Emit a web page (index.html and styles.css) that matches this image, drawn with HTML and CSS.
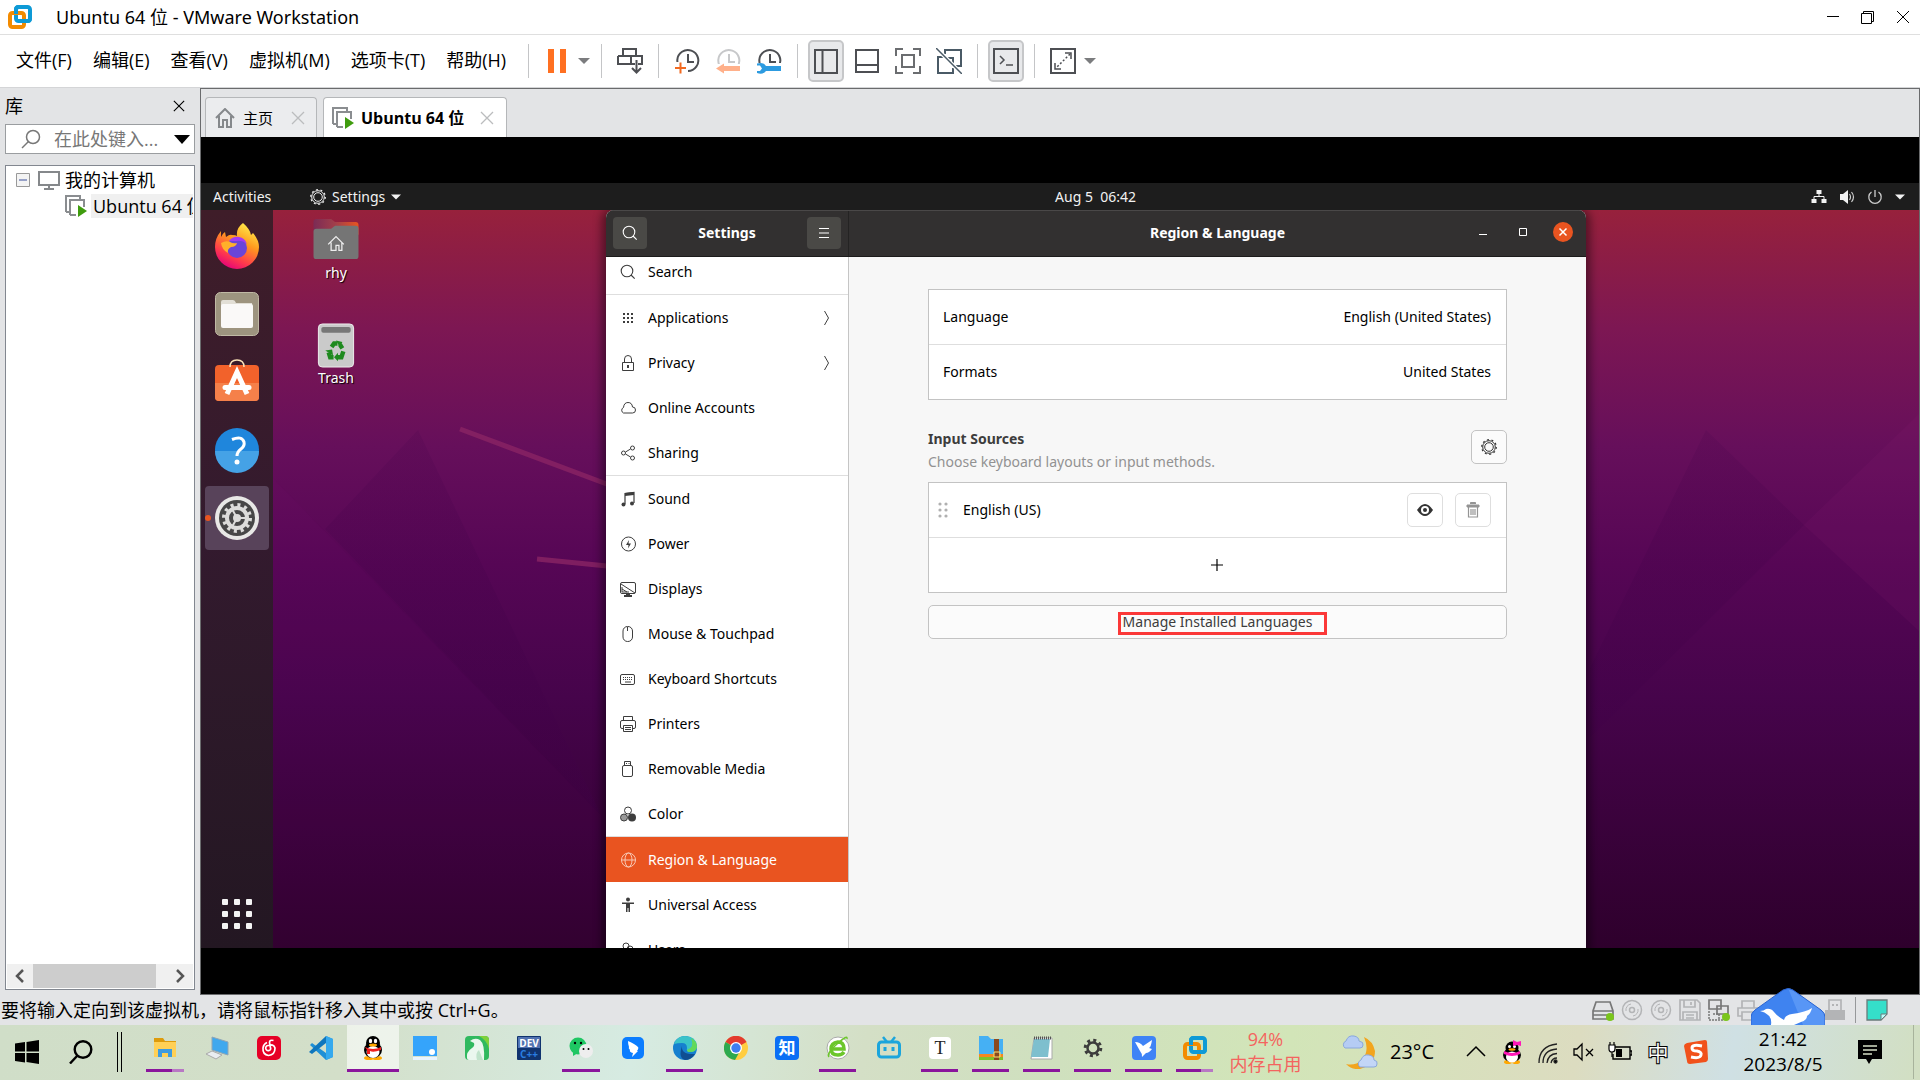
FILE: index.html
```html
<!DOCTYPE html>
<html lang="zh-CN">
<head>
<meta charset="utf-8">
<meta name="viewport" content="width=device-width, initial-scale=1">
<title>Ubuntu 64 位 - VMware Workstation</title>
<link rel="stylesheet" href="styles.css">
</head>
<body>
<svg class="defs" aria-hidden="true">
  <defs>
    <symbol id="vmware" viewBox="0 0 24 24">
      <rect x="8" y="2" width="14" height="14" rx="2.500" fill="none" stroke="#0e9ad6" stroke-width="4"/>
      <rect x="2" y="8" width="14" height="14" rx="2.500" fill="none" stroke="#f38b00" stroke-width="4"/>
      <path d="M8 9V4.500Q8 2 10.500 2H13" fill="none" stroke="#0e9ad6" stroke-width="4"/>
      <path d="M10 16h9.500Q22 16 22 13.500V10" fill="none" stroke="#0e9ad6" stroke-width="4"/>
    </symbol>
    <symbol id="vm" viewBox="0 0 22 22">
      <path d="M1 17V1h14v3M1 17h3" fill="none" stroke="#8a8d90" stroke-width="2"/>
      <path d="M5 20V5h14v7M5 20h6" fill="none" stroke="#8a8d90" stroke-width="2"/>
      <path d="M13 10l9 6-9 6z" fill="#3f9c0e"/>
    </symbol>
    <symbol id="close" viewBox="0 0 14 14"><path d="M1 1l12 12M13 1L1 13" fill="none" stroke="currentColor" stroke-width="1.300"/></symbol>
    <symbol id="down" viewBox="0 0 12 12"><path d="M0 3h12L6 9z" fill="currentColor"/></symbol>
    <symbol id="clock" viewBox="0 0 26 26"><path d="M7 20.500A10.500 10.500 0 1 1 14 23M14 6v8h6" fill="none" stroke="currentColor" stroke-width="2"/></symbol>
    <symbol id="gear" viewBox="0 0 16 16">
      <circle cx="8" cy="8" r="4.300" fill="none" stroke="currentColor"/>
      <circle cx="8" cy="8" r="6.300" fill="none" stroke="currentColor"/>
      <circle cx="8" cy="8" r="7.300" fill="none" stroke="currentColor" stroke-width="1.200" stroke-dasharray="2 2.587"/>
    </symbol>
    <symbol id="magnifier" viewBox="0 0 16 16"><circle cx="7" cy="7" r="5.800" fill="none" stroke="currentColor" stroke-width="1.100"/><path d="M11 11l3.700 3.700" stroke="currentColor" stroke-width="1.100"/></symbol>
    <symbol id="disc" viewBox="0 0 22 22"><circle cx="11" cy="11" r="9.500" fill="none" stroke="currentColor" stroke-width="1.500"/><circle cx="11" cy="11" r="2.500" fill="none" stroke="currentColor" stroke-width="1.500"/><path d="M5 12a6 6 0 0 1 5-7M17 10a6 6 0 0 1-5 7" fill="none" stroke="currentColor"/></symbol>
  </defs>
</svg>

<header class="titlebar">
  <svg class="i24"><use href="#vmware"/></svg>
  <h1 class="title">Ubuntu 64 位 - VMware Workstation</h1>
  <button class="win-btn" aria-label="最小化"><svg viewBox="0 0 14 14"><path d="M1 6.500h12" stroke="#000"/></svg></button>
  <button class="win-btn" aria-label="还原"><svg viewBox="0 0 14 14"><path d="M.5 3.500h10v10H.5zM2.500 3V1.500h10v10H11" fill="none" stroke="#000"/></svg></button>
  <button class="win-btn" aria-label="关闭"><svg viewBox="0 0 14 14"><path d="M1 1l12 12M13 1L1 13" stroke="#000"/></svg></button>
</header>

<div class="menubar">
  <nav class="menus">
    <button>文件(F)</button><button>编辑(E)</button><button>查看(V)</button><button>虚拟机(M)</button><button>选项卡(T)</button><button>帮助(H)</button>
  </nav>
  <div class="tools">
    <span class="sep"></span>
    <button class="tool" aria-label="挂起"><svg viewBox="0 0 26 26"><path d="M4 1h6v24H4zM16 1h6v24h-6z" fill="#ff7021"/></svg></button>
    <button class="drop" aria-label="电源选项"><svg><use href="#down"/></svg></button>
    <span class="sep"></span>
    <button class="tool" aria-label="发送"><svg viewBox="0 0 26 26"><path d="M6 8V1h13v7M1 8h24v8h-4M14 8v8H1V8M14 16h4M19.500 12v12M15 20l4.500 4.500L24 20" fill="none" stroke="#4d4f53" stroke-width="2"/></svg></button>
    <span class="sep"></span>
    <button class="tool" aria-label="拍摄快照"><svg viewBox="0 0 26 26"><use href="#clock"/><path d="M0 14h12v11H0z" fill="#fff"/><path d="M1 20h11M6.500 14.500v11" stroke="#f26a21" stroke-width="2"/></svg></button>
    <button class="tool" aria-label="恢复快照"><svg viewBox="0 0 26 26" color="#c7c8ca"><use href="#clock"/><path d="M0 16h26v9H0z" fill="#fff"/><path d="M1 20.500l8-5v2.500h16v5H9v2.500z" fill="#ffb08a"/></svg></button>
    <button class="tool" aria-label="管理快照"><svg viewBox="0 0 26 26"><use href="#clock"/><path d="M0 15h26v10H0z" fill="#fff"/><path d="M1 15.500q6-2 9 2.500h15v5H10q-3 4-9 2v-2h3l2-2.500-2-3H1z" fill="#2d9be0"/></svg></button>
    <span class="sep"></span>
    <button class="tool on" aria-label="显示库"><svg viewBox="0 0 26 26"><path d="M2 2h22v23H2zM9.500 2v23" fill="none" stroke="#4d4f53" stroke-width="2"/></svg></button>
    <button class="tool" aria-label="缩略图栏"><svg viewBox="0 0 26 26"><path d="M2 2h22v22H2zM2 17h22" fill="none" stroke="#4d4f53" stroke-width="2"/></svg></button>
    <button class="tool" aria-label="全屏"><svg viewBox="0 0 26 26"><path d="M1 8V1h7M18 1h7v7M25 18v7h-7M8 25H1v-7M7 7h12v12H7z" fill="none" stroke="#6b6d70" stroke-width="2"/></svg></button>
    <button class="tool" aria-label="Unity"><svg viewBox="0 0 26 26"><path d="M9 6V2h16v16h-5M8 9H2v16h15v-5M11 10h6v6" fill="none" stroke="#4a5a66" stroke-width="2"/><path d="M0 0l26 26" stroke="#fff" stroke-width="4"/><path d="M0 0l26 26" stroke="#4a5a66" stroke-width="1.500"/></svg></button>
    <span class="sep"></span>
    <button class="tool on" aria-label="控制台"><svg viewBox="0 0 26 26"><path d="M1 1h24v24H1z" fill="none" stroke="#4d4f53" stroke-width="2"/><path d="M7 8l4 4-4 4M13 17h7" fill="none" stroke="#4d4f53" stroke-width="1.500"/></svg></button>
    <span class="sep"></span>
    <button class="tool" aria-label="拉伸"><svg viewBox="0 0 26 26"><path d="M1 1h24v24H1z" fill="none" stroke="#4d4f53" stroke-width="2"/><path d="M15 5h6v6M5 15v6h6" fill="none" stroke="#4d4f53" stroke-width="1.500"/><path d="M20 6L6 20" stroke="#4d4f53" stroke-width="1.500" stroke-dasharray="2 2"/></svg></button>
    <button class="drop" aria-label="拉伸选项"><svg><use href="#down"/></svg></button>
  </div>
</div>

<div class="main">
  <aside class="library">
    <div class="lib-head"><h2>库</h2><button aria-label="关闭库"><svg><use href="#close"/></svg></button></div>
    <div class="lib-search">
      <svg viewBox="0 0 20 20"><circle cx="12" cy="8" r="6.500" fill="none" stroke="#777" stroke-width="1.500"/><path d="M7.500 12.500L1 19" stroke="#777" stroke-width="1.500"/></svg>
      <input type="text" placeholder="在此处键入..." aria-label="搜索库">
      <button aria-label="搜索选项"><svg viewBox="0 0 16 10"><path d="M0 1h16L8 10z"/></svg></button>
    </div>
    <div class="tree">
      <div class="tree-row">
        <svg class="minus" viewBox="0 0 14 14"><path d="M.5.500h13v13H.5z" fill="#f4f4f4" stroke="#999"/><path d="M3 7h8" stroke="#3a4f9a"/></svg>
        <svg class="i22" viewBox="0 0 22 22"><path d="M1 3h20v13H1zM11 16v4M6 20h10" fill="none" stroke="#85888b" stroke-width="2"/></svg>
        <span>我的计算机</span>
      </div>
      <div class="tree-row child">
        <svg class="i22"><use href="#vm"/></svg>
        <span class="picked">Ubuntu 64 位</span>
      </div>
      <div class="hscroll">
        <svg viewBox="0 0 10 14"><path d="M8 1L2 7l6 6" fill="none" stroke="#555" stroke-width="2.500"/></svg>
        <span class="thumb"></span>
        <svg viewBox="0 0 10 14"><path d="M2 1l6 6-6 6" fill="none" stroke="#555" stroke-width="2.500"/></svg>
      </div>
    </div>
  </aside>

  <section class="view">
    <div class="tabs">
      <div class="tab home">
        <svg class="i20" viewBox="0 0 20 20"><path d="M1 10l9-9 9 9M4 8v11h4v-7h4v7h4V8" fill="none" stroke="#85888b" stroke-width="2"/></svg>
        <span>主页</span>
        <button aria-label="关闭主页"><svg><use href="#close"/></svg></button>
      </div>
      <div class="tab active">
        <svg class="i22"><use href="#vm"/></svg>
        <span>Ubuntu 64 位</span>
        <button aria-label="关闭 Ubuntu"><svg><use href="#close"/></svg></button>
      </div>
    </div>

    <div class="guest">
      <div class="topbar">
        <span class="activities">Activities</span>
        <span class="appmenu"><svg class="i16"><use href="#gear"/></svg>Settings<svg class="caret"><use href="#down"/></svg></span>
        <time class="clock">Aug 5&nbsp; 06:42</time>
        <span class="indicators">
          <svg class="i16" viewBox="0 0 16 16"><path d="M5.500 1h5v4h-5zM.5 10h5v4h-5zM10.500 10h5v4h-5z" fill="#f2f2f2"/><path d="M8 4v4M3 11V7.500h10V11" fill="none" stroke="#f2f2f2"/></svg>
          <svg class="i16" viewBox="0 0 16 16"><path d="M1 5h3l5-4v14l-5-4H1z" fill="#f2f2f2"/><path d="M10.500 5q2 3 0 6M12.500 3q4 5 0 10" fill="none" stroke="#ccc" stroke-width="1.200"/></svg>
          <svg class="i16" viewBox="0 0 16 16"><path d="M4.500 3a6.200 6.200 0 1 0 7 0M8 1v7" fill="none" stroke="#ccc" stroke-width="1.300"/></svg>
          <svg class="caret"><use href="#down"/></svg>
        </span>
      </div>

      <div class="desktop">
        <svg class="wallpaper" viewBox="0 0 1718 738" preserveAspectRatio="none" aria-hidden="true">
          <defs>
            <linearGradient id="facet" x1="0" y1="0" x2="0" y2="1"><stop offset="0" stop-color="#400048" stop-opacity=".14"/><stop offset=".5" stop-color="#400048" stop-opacity=".22"/><stop offset="1" stop-color="#400048" stop-opacity=".28"/></linearGradient>
          </defs>
          <path d="M217 220L400 605 124 319z" fill="url(#facet)"/>
          <path d="M72 268L400 605 400 738H72z" fill="#8a1080" opacity=".05"/>
          <path d="M1505 220l98 95-214 213v-70z" fill="url(#facet)"/>
          <path d="M1603 315l115-111v217z" fill="#8a1d74" opacity=".12"/>
          <path d="M259 219l160 60M336 349l80 8" stroke="#8a2464" stroke-width="5" opacity=".8"/>
        </svg>

        <nav class="dock" aria-label="Dock">
          <button aria-label="Firefox"><svg viewBox="0 0 44 46">
            <defs><linearGradient id="ff" x1=".8" y1="0" x2=".3" y2="1"><stop offset="0" stop-color="#fff44f"/><stop offset=".4" stop-color="#ff9a1e"/><stop offset=".75" stop-color="#ff3a4c"/><stop offset="1" stop-color="#e4007c"/></linearGradient></defs>
            <path d="M28 0q7 6 8 12l2-2q6 7 6 14a22 22 0 0 1-44 0Q0 15 6 8v6q2-4 4-5l1 5q4-3 6-2 4 0 5 1Q21 5 28 0z" fill="url(#ff)"/>
            <circle cx="22" cy="25" r="10" fill="#6a45d8"/><path d="M14 18q4-5 10-4 6 1 8 7-5-4-10-3z" fill="#a43bf0"/>
            <path d="M6 20q5-3 9-1 3 2 7 1-1 4-6 4-4 2-3 6-6-3-7-10z" fill="#ffb02a"/>
          </svg></button>
          <button aria-label="Files"><svg viewBox="0 0 44 46"><rect x=".5" y="1.500" width="43" height="43" rx="5" fill="#9d947f" stroke="#c0b9a5"/><path d="M6 16V11q0-2 2-2h10q2 0 3 3h16v6z" fill="#e2dfd6"/><rect x="6" y="13" width="32" height="24" rx="2" fill="#faf9f8"/></svg></button>
          <button aria-label="Software"><svg viewBox="0 0 44 46"><rect y="6" width="44" height="36" rx="4" fill="#f2622b"/><path d="M0 24h44v14q0 4-4 4H4q-4 0-4-4z" fill="#f5804a"/><path d="M15 8q0-7 7-7t7 7" fill="none" stroke="#fbe3b8" stroke-width="1.500"/><path d="M12 35l10-22 10 22" fill="none" stroke="#fff" stroke-width="5"/><path d="M10 28.500h24" stroke="#fff" stroke-width="5" stroke-linecap="round"/></svg></button>
          <button aria-label="Help"><svg viewBox="0 0 44 46"><circle cx="22" cy="23" r="22" fill="#1f86dc"/><path d="M0 24a22 22 0 0 0 44 0z" fill="#45a2e6"/><path d="M17 12.500q10-4 12 2.500 1 4-3 7t-4 7" fill="none" stroke="#fff" stroke-width="3"/><circle cx="22" cy="35" r="2.500" fill="#fff"/></svg></button>
          <button class="running" aria-label="Settings"><svg viewBox="0 0 44 46"><circle cx="22" cy="23" r="22" fill="#e8e8e6"/><circle cx="22" cy="23" r="18" fill="#474747"/><circle cx="22" cy="23" r="13" fill="none" stroke="#dcdcda" stroke-width="4" stroke-dasharray="3 3.807"/><circle cx="22" cy="23" r="10" fill="none" stroke="#dcdcda" stroke-width="4"/><circle cx="22" cy="23" r="4" fill="#dcdcda"/><path d="M22 23h10M22 23l-5-9M22 23l-5 9" stroke="#dcdcda" stroke-width="2"/></svg></button>
          <button class="apps" aria-label="Show Applications"><svg viewBox="0 0 44 46"><g fill="#f4f4f4"><rect x="7" y="8" width="6" height="6" rx="1"/><rect x="19" y="8" width="6" height="6" rx="1"/><rect x="31" y="8" width="6" height="6" rx="1"/><rect x="7" y="20" width="6" height="6" rx="1"/><rect x="19" y="20" width="6" height="6" rx="1"/><rect x="31" y="20" width="6" height="6" rx="1"/><rect x="7" y="32" width="6" height="6" rx="1"/><rect x="19" y="32" width="6" height="6" rx="1"/><rect x="31" y="32" width="6" height="6" rx="1"/></g></svg></button>
        </nav>

        <div class="shortcuts">
          <figure><svg viewBox="0 0 46 46"><defs><linearGradient id="fd"><stop offset="0" stop-color="#7b2b55"/><stop offset=".5" stop-color="#a33f4a"/><stop offset="1" stop-color="#e95420"/></linearGradient></defs><path d="M0 14V4q0-3 3-3h15l4 3h21q3 0 3 3v10z" fill="url(#fd)"/><path d="M0 14q0-3 3-3h15l4-3h21q3 0 3 3v28q0 3-3 3H3q-3 0-3-3z" fill="#757575"/><path d="M15 27l8-8 8 8M18 25v8h5v-5h3v5h3v-8" fill="none" stroke="#eee" stroke-width="1.300"/></svg><figcaption>rhy</figcaption></figure>
          <figure><svg viewBox="0 0 46 46"><rect x="5" y="1" width="36" height="44" rx="4" fill="#cacaca" stroke="#eee"/><rect x="8" y="4" width="30" height="6" rx="2" fill="#777"/><g fill="none" stroke="#1f8a1f" stroke-width="4.500"><path d="M18.500 24.500l2.500-3.500h3.500M27 22l2.500 4M30.500 29l-2 6H24M20.500 35H17l-1.500-5"/></g><path d="M23 18l6.500 1.500L27 25zM25 30.500V39l-4-4zM12 28l7-1 1 6z" fill="#1f8a1f"/></svg><figcaption>Trash</figcaption></figure>
        </div>

        <section class="window">
          <header class="wbar">
            <div class="wbar-left">
              <button class="hbtn" aria-label="Search"><svg class="i16"><use href="#magnifier"/></svg></button>
              <h2>Settings</h2>
              <button class="hbtn" aria-label="Menu"><svg class="i16" viewBox="0 0 16 16"><path d="M3 3.500h10M3 8h10M3 12.500h10" stroke="#fff" stroke-width="1.200"/></svg></button>
            </div>
            <div class="wbar-right">
              <h2>Region &amp; Language</h2>
              <div class="wctl">
                <button aria-label="Minimize"><svg viewBox="0 0 20 20"><path d="M6 12.500h8" stroke="#fff"/></svg></button>
                <button aria-label="Maximize"><svg viewBox="0 0 20 20"><path d="M6.500 6.500h7v7h-7z" fill="none" stroke="#fff"/></svg></button>
                <button class="wclose" aria-label="Close"><svg viewBox="0 0 20 20"><path d="M6.500 6.500l7 7M13.500 6.500l-7 7" stroke="#fff" stroke-width="1.500"/></svg></button>
              </div>
            </div>
          </header>
          <div class="wbody">
            <nav class="cats">
              <a href="#" class="end"><svg><use href="#magnifier"/></svg>Search</a>
              <a href="#"><svg viewBox="0 0 16 16"><path d="M3 4h10M3 8h10M3 12h10" stroke="currentColor" stroke-width="2" stroke-dasharray="2 2"/></svg>Applications<svg class="chev" viewBox="0 0 8 16"><path d="M1.500 1l4 7-4 7" fill="none" stroke="currentColor"/></svg></a>
              <a href="#"><svg viewBox="0 0 16 16"><path d="M2.500 7.500h11v8h-11zM4.500 7V4a3.500 3.500 0 0 1 7 0v3" fill="none" stroke="currentColor"/><path d="M7 10h2v3H7z" fill="currentColor"/></svg>Privacy<svg class="chev" viewBox="0 0 8 16"><path d="M1.500 1l4 7-4 7" fill="none" stroke="currentColor"/></svg></a>
              <a href="#"><svg viewBox="0 0 16 16"><path d="M3.500 13a3 3 0 0 1 0-5.500Q4 2.500 8 2.500t4.500 4.500a3 3 0 0 1 0 6z" fill="none" stroke="currentColor"/></svg>Online Accounts</a>
              <a href="#" class="end"><svg viewBox="0 0 16 16"><g fill="none" stroke="currentColor"><circle cx="3.500" cy="8" r="2"/><circle cx="12.500" cy="3" r="2"/><circle cx="12.500" cy="13" r="2"/><path d="M5.500 7l5-3M5.500 9l5 3"/></g></svg>Sharing</a>
              <a href="#"><svg viewBox="0 0 16 16"><path d="M5 13V2.500l9-1V12" fill="none" stroke="currentColor" stroke-width="1.200"/><path d="M5 2l9-1v3l-9 1z" fill="currentColor"/><circle cx="3.500" cy="13.500" r="2" fill="currentColor"/><circle cx="12" cy="12.500" r="2" fill="currentColor"/></svg>Sound</a>
              <a href="#"><svg viewBox="0 0 16 16"><circle cx="8.500" cy="8" r="7" fill="none" stroke="currentColor"/><path d="M9 4L6 9h2.500L8 12.500l3-5H8.500z" fill="currentColor"/></svg>Power</a>
              <a href="#"><svg viewBox="0 0 16 16"><rect x=".5" y="1.500" width="15" height="11" rx="1.500" fill="none" stroke="currentColor"/><path d="M1 3l14 9" stroke="currentColor"/><path d="M2 6v5h7M2 8l5 3" fill="none" stroke="currentColor"/><path d="M6 13h4v1h2v2H4v-2h2z" fill="currentColor"/></svg>Displays</a>
              <a href="#"><svg viewBox="0 0 16 16"><rect x="3" y=".5" width="9.500" height="15" rx="4.500" fill="none" stroke="currentColor"/><path d="M7.500 1v4" stroke="currentColor"/></svg>Mouse &amp; Touchpad</a>
              <a href="#"><svg viewBox="0 0 16 16"><rect x=".5" y="3.500" width="14" height="10" rx="1.500" fill="none" stroke="currentColor"/><path d="M3 6.500h10M3 8.500h10" stroke="currentColor" stroke-dasharray="1 1"/><path d="M5 11h6" stroke="currentColor"/></svg>Keyboard Shortcuts</a>
              <a href="#"><svg viewBox="0 0 16 16"><path d="M3.500 4V.5h9V4M3 12.500H2Q.5 12.500.5 11V6q0-1.500 1.500-1.500h12q1.500 0 1.500 1.500v5q0 1.500-1.500 1.500h-1M3.500 9.500v6h9v-6zM5 11.500h6M5 13.500h6" fill="none" stroke="currentColor"/></svg>Printers</a>
              <a href="#"><svg viewBox="0 0 16 16"><path d="M4.500 4V.5h6V4M6 2.500h1M8.500 2.500h1" fill="none" stroke="currentColor"/><rect x="2.500" y="4.500" width="10" height="11" rx="1.500" fill="none" stroke="currentColor"/></svg>Removable Media</a>
              <a href="#" class="end"><svg viewBox="0 0 16 16"><circle cx="8" cy="4.500" r="3.500" fill="none" stroke="currentColor"/><circle cx="4" cy="11.500" r="3.500" fill="#999" stroke="currentColor"/><circle cx="12" cy="11.500" r="4" fill="currentColor"/></svg>Color</a>
              <a href="#" class="current" aria-current="page"><svg viewBox="0 0 16 16"><g fill="none" stroke="currentColor"><circle cx="8.500" cy="8" r="7"/><ellipse cx="8.500" cy="8" rx="3.500" ry="7"/><path d="M1.500 8h14"/></g></svg>Region &amp; Language</a>
              <a href="#"><svg viewBox="0 0 16 16"><circle cx="8" cy="2.500" r="2" fill="currentColor"/><path d="M2 5.500h12v1.500h-4V15H8.500v-4h-1v4H6V7H2z" fill="currentColor"/></svg>Universal Access</a>
              <a href="#"><svg viewBox="0 0 16 16"><g fill="none" stroke="currentColor"><circle cx="6" cy="4" r="3"/><circle cx="10" cy="7" r="3"/></g></svg>Users</a>
            </nav>
            <div class="panel">
              <div class="card">
                <div class="row"><span>Language</span><span>English (United States)</span></div>
                <div class="row"><span>Formats</span><span>United States</span></div>
              </div>
              <div class="sources-head">
                <div><h3>Input Sources</h3><p>Choose keyboard layouts or input methods.</p></div>
                <button class="sq" aria-label="Input options"><svg class="i16"><use href="#gear"/></svg></button>
              </div>
              <div class="card">
                <div class="row source">
                  <svg class="grip" viewBox="0 0 10 16"><g fill="#b0b0b0"><circle cx="2" cy="2" r="1.600"/><circle cx="8" cy="2" r="1.600"/><circle cx="2" cy="8" r="1.600"/><circle cx="8" cy="8" r="1.600"/><circle cx="2" cy="14" r="1.600"/><circle cx="8" cy="14" r="1.600"/></g></svg>
                  <span class="grow">English (US)</span>
                  <button class="sq soft" aria-label="Preview"><svg class="i16" viewBox="0 0 16 16"><path d="M0 8q4-6 8-6t8 6q-4 6-8 6T0 8z" fill="#333"/><circle cx="8" cy="8" r="4" fill="#fff"/><circle cx="8" cy="8" r="2" fill="#333"/></svg></button>
                  <button class="sq soft" aria-label="Remove"><svg class="i16" viewBox="0 0 16 16"><path d="M2 3h12v2H2zM5.500 2V.5h5V2" fill="#949494" stroke="#949494"/><path d="M3.500 5v10h9V5M6 7v6M8 7v6M10 7v6" fill="none" stroke="#949494" stroke-width="1.200"/></svg></button>
                </div>
                <button class="row add" aria-label="Add input source"><svg viewBox="0 0 12 12"><path d="M6 0v12M0 6h12" stroke="#000" stroke-width="1.200"/></svg></button>
              </div>
              <button class="manage">Manage Installed Languages<span class="mark"></span></button>
            </div>
          </div>
        </section>
      </div>
    </div>
  </section>
</div>

<footer class="status">
  <span class="hint">要将输入定向到该虚拟机，请将鼠标指针移入其中或按 Ctrl+G。</span>
  <div class="devices">
    <svg viewBox="0 0 22 22"><path d="M4 3h14l3 9v8H1v-8zM1 12h20M1 16h16" fill="none" stroke="#777" stroke-width="1.700"/><circle cx="18" cy="18" r="4" fill="#7ac51c"/></svg>
    <svg><use href="#disc"/></svg>
    <svg><use href="#disc"/></svg>
    <svg viewBox="0 0 22 22"><path d="M1 1h17l3 3v17H1zM5 1v7h11V1M4 21v-8h14v8M12 3v3M7 16h8M7 19h8" fill="none" stroke="currentColor" stroke-width="1.700"/></svg>
    <svg viewBox="0 0 22 22"><path d="M1 1h12v9H1zM9 7h11v8H9z" fill="#e3e4e6" stroke="#777" stroke-width="1.700"/><path d="M1 12v9h14M5 15h6v6" fill="none" stroke="#777" stroke-width="1.500" stroke-dasharray="2 1"/><circle cx="18" cy="18" r="4" fill="#7ac51c"/></svg>
    <svg viewBox="0 0 22 22"><path d="M5 9V2h12v7M5 17H1V9h20v8h-4M5 13h12v8H5z" fill="none" stroke="currentColor" stroke-width="1.700"/></svg>
    <span class="covered"></span>
    <svg viewBox="0 0 22 22"><path d="M5 11V1h12v10" fill="none" stroke="currentColor" stroke-width="1.700"/><path d="M1 11h20v10H1z" fill="currentColor"/><path d="M8 6h2M12 6h2" stroke="currentColor" stroke-width="2"/></svg>
  </div>
  <span class="vline"></span>
  <svg class="i22" viewBox="0 0 22 22"><path d="M1 1h20v14l-6 6H1z" fill="#35dfca" stroke="#6a7a7a" stroke-width="1.300"/><path d="M15 21v-6h6z" fill="#bff" stroke="#6a7a7a"/></svg>
  <svg class="bird" viewBox="0 0 74 37"><path d="M0 37V29q0-4 4-7L32 2q5-3 10 0l28 20q4 3 4 7v8z" fill="#3f83f0"/><path d="M37 0q3 0 5 2l28 20q4 3 4 7v8H52z" fill="#69a3fa" opacity=".6"/><path d="M0 37V29q0-4 4-7L32 2q5-3 10 0l28 20q4 3 4 7v8" fill="none" stroke="#2a63d0"/><path d="M9 23q4 0 6-2 5-1 8 3 4 5 10 8 1-5 8-6 14-2 20-6-1 5-5 8 0 4-6 6l-7 3H20q1-7-3-10-3-3-8-4z" fill="#fff"/></svg>
</footer>

<div class="taskbar">
  <button class="start" aria-label="开始"><svg viewBox="0 0 24 24"><path d="M0 3.500L10 2v9.500H0zM11.500 2L24 0v11.500H11.500zM0 13h10v9.500L0 21zM11.500 13H24v11l-12.500-2z"/></svg></button>
  <button class="find" aria-label="搜索"><svg viewBox="0 0 24 24"><circle cx="14" cy="9.500" r="8.300" fill="none" stroke="#000" stroke-width="2.400"/><path d="M8.500 15.500L1 23.500" stroke="#000" stroke-width="2.400"/></svg></button>
  <span class="bars"></span>
  <div class="apps-row">
    <button class="run multi" aria-label="文件资源管理器"><svg viewBox="0 0 24 24"><path d="M1 4V2h9l2 3h11v4H1z" fill="#dd9b0c"/><path d="M1 6h22v15H1z" fill="#ffd055"/><path d="M5 21v-8h14v8h-4v-4H9v4z" fill="#3d9be0"/></svg></button>
    <button aria-label="远程桌面"><svg viewBox="0 0 24 24"><path d="M7 1l16 5v13L7 14z" fill="#3fa8ee" stroke="#90a5b5"/><path d="M1 18l6-3 10 4-6 4z" fill="#e9edf0" stroke="#aaa"/></svg></button>
    <button aria-label="网易云音乐"><svg viewBox="0 0 24 24"><rect width="24" height="24" rx="5" fill="#e60026"/><path d="M16.500 4.500q-4-1-4 2l1.200 6.500a2.600 2.600 0 1 1-3-3.500q6-2 7.300 2.500 0 7-6.500 7.500-6-1-5.500-7.500 .5-4 4-5.500" fill="none" stroke="#fff" stroke-width="1.700"/></svg></button>
    <button aria-label="Visual Studio Code"><svg viewBox="0 0 24 24"><path d="M17 0l7 3v18l-7 3L1 9l2-2 14 10z" fill="#1f8fd6"/><path d="M17 0v7L3 18l-3-2z" fill="#0f76bd"/><path d="M17 0l7 3v18l-7 3z" fill="#35a9ee"/></svg></button>
    <button class="focus" aria-label="QQ"><svg viewBox="0 0 24 24"><ellipse cx="8" cy="22" rx="5" ry="2" fill="#ffa800"/><ellipse cx="16" cy="22" rx="5" ry="2" fill="#ffa800"/><ellipse cx="12" cy="14" rx="9" ry="8" /><circle cx="12" cy="7" r="7"/><ellipse cx="12" cy="16" rx="6.500" ry="6" fill="#fff"/><ellipse cx="9.500" cy="5" rx="1.700" ry="2.200" fill="#fff"/><ellipse cx="14.500" cy="5" rx="1.700" ry="2.200" fill="#fff"/><ellipse cx="12" cy="9" rx="4" ry="1.500" fill="#ffa800"/><path d="M4 11q8 4 16 0v3q-8 3-11 1v3H6v-4z" fill="#ee2020"/></svg></button>
    <button aria-label="便签"><svg viewBox="0 0 24 24"><path d="M0 0h24v20H0z" fill="#35a4fb"/><path d="M0 21h24v3H0z" fill="#e8f4ff"/><circle cx="19" cy="16" r="3" fill="#fff"/></svg></button>
    <button aria-label="Navicat"><svg viewBox="0 0 24 24"><rect width="24" height="24" rx="4" fill="#30b95f"/><path d="M14 0h6q4 0 4 4v9q-2-9-10-13z" fill="#7fd13a"/><path d="M2 22q-1-6 5-10 3-2 2-5L5 5q5-4 10-1 5 4 4 20H4q-2 0-2-2z" fill="#eaf7ee"/><path d="M12 24q-2-7 2-10l4 10z" fill="#c0e3cb"/></svg></button>
    <button aria-label="Dev-C++"><svg viewBox="0 0 24 24"><rect width="24" height="24" rx="1" fill="#10336f"/><rect x="1" y="1" width="22" height="11" fill="#5272b0"/><text x="12" y="11" class="dev">DEV</text><text x="12" y="22" class="cpp">C++</text></svg></button>
    <button class="run" aria-label="微信"><svg viewBox="0 0 24 24"><circle cx="9" cy="10" r="8.500" fill="#1fc763"/><path d="M4 16v4l5-3z" fill="#1fc763"/><circle cx="6" cy="7" r="1.200"/><circle cx="12" cy="7" r="1.200"/><circle cx="17" cy="15" r="7" fill="#eee"/><circle cx="14.500" cy="13" r="1"/><circle cx="19.500" cy="13" r="1"/></svg></button>
    <button aria-label="钉钉"><svg viewBox="0 0 24 24"><rect x="1" y="1" width="22" height="22" rx="5" fill="#0b7dff"/><path d="M7 5q7 3 10 6 1 1-1 4h1l-6 6 1-4q-4-1-3-3-2-2-1-3-1-3-1-6z" fill="#fff"/></svg></button>
    <button class="run" aria-label="Edge"><svg viewBox="0 0 24 24"><circle cx="12" cy="12" r="12" fill="#1680cf"/><path d="M1 8Q4 0 12 0q11 0 12 10 0 6-7 6-4 0-3-4 0-5-5-5T1 8z" fill="#3ac3c9"/><path d="M18 2q6 3 6 9-1 5-7 5-3 0-3-2 8-3 4-12z" fill="#63d95a"/><path d="M9 10q-1 9 13 8-4 6-10 6-7-2-3-14z" fill="#104f92"/></svg></button>
    <button aria-label="Chrome"><svg viewBox="0 0 24 24"><circle cx="12" cy="12" r="12" fill="#ffcd40"/><path d="M12 12L1.500 6A12 12 0 0 1 22.500 6z" fill="#e33b2e"/><path d="M12 12L1.500 6A12 12 0 0 0 11 24l5-9z" fill="#2da94f"/><circle cx="12" cy="12" r="6" fill="#fff"/><circle cx="12" cy="12" r="4.700" fill="#3e7ef0"/></svg></button>
    <button aria-label="知乎"><svg viewBox="0 0 24 24"><rect width="24" height="24" rx="4" fill="#0b6ff5"/><text x="12" y="18" class="zhi">知</text></svg></button>
    <button class="run" aria-label="浏览器"><svg viewBox="0 0 24 24"><circle cx="12" cy="12" r="11" fill="#fff" stroke="#aaa"/><path d="M5 13h13q0-7-6-7-7 1-7 7t7 6q4 0 6-3" fill="none" stroke="#6cc62c" stroke-width="3.500"/><path d="M3 21Q0 18 11 8T21 3" fill="none" stroke="#6cc62c" stroke-width="1.500"/></svg></button>
    <button aria-label="哔哩哔哩"><svg viewBox="0 0 24 24"><rect x="1.500" y="6" width="21" height="15" rx="3" fill="none" stroke="#1ba5dc" stroke-width="3"/><path d="M6 1l4 5M18 1l-4 5" stroke="#1ba5dc" stroke-width="2.500"/><path d="M8 11v4M16 11v4" stroke="#1ba5dc" stroke-width="3"/></svg></button>
    <button class="run" aria-label="Typora"><svg viewBox="0 0 24 24"><rect x="1" y="1" width="22" height="22" rx="4" fill="#fff"/><text x="12" y="18" class="ty">T</text></svg></button>
    <button class="run" aria-label="压缩"><svg viewBox="0 0 24 24"><path d="M0 0h9l3 3h12v15H0z" fill="#45b0f4"/><path d="M0 18h24v3H0z" fill="#f5871f"/><path d="M0 21h24v3H0z" fill="#7fc22c"/><path d="M15 3h5v21h-5z" fill="#8a4a1e"/><path d="M15 16h6v5h-6z" fill="none" stroke="#ffdf70"/></svg></button>
    <button class="run" aria-label="记事本"><svg viewBox="0 0 24 24"><path d="M4 2h18v21H1z" fill="#fff" stroke="#aaa"/><path d="M4 3h16l-2 18H1z" fill="#7ebfce"/><path d="M4 2h17" stroke="#555" stroke-width="3" stroke-dasharray="1 1"/></svg></button>
    <button class="run" aria-label="设置"><svg viewBox="0 0 24 24" fill="none" stroke="#3c3c3c"><circle cx="12" cy="12" r="5.500" stroke-width="2.500"/><circle cx="12" cy="12" r="7.800" stroke-width="3" stroke-dasharray="3 3.126"/></svg></button>
    <button class="run" aria-label="飞书"><svg viewBox="0 0 24 24"><rect width="24" height="24" rx="4" fill="#3f83f6"/><path d="M3 6q5 0 8 4l9-6q-1 7-3 8l3 1q-3 4-6 4l-4 4q0-4-2-6z" fill="#fff"/></svg></button>
    <button class="run multi" aria-label="VMware"><svg><use href="#vmware"/></svg></button>
  </div>
  <div class="mem"><span>94%</span><span>内存占用</span></div>
  <div class="weather"><svg viewBox="0 0 36 34"><path d="M22 2q6 14-2 23-7 6-16 4 6 6 14 5Q33 30 33 16 31 6 22 2z" fill="#f2a51e"/><path d="M3 13a4 4 0 0 1 1-7q2-6 8-5 5 1 5 5 5 1 4 4 0 3-3 3z" fill="#b5ccf4" stroke="#8aa8dc"/><path d="M18 32a4 4 0 0 1 1-7q2-6 8-5 5 1 5 5 4 1 3 4 0 3-3 3z" fill="#c3d6f7" stroke="#8aa8dc"/></svg>23°C</div>
  <div class="tray">
    <svg viewBox="0 0 24 24"><path d="M3 16l9-9 9 9" fill="none" stroke="#000" stroke-width="1.500"/></svg>
    <svg viewBox="0 0 24 24"><ellipse cx="8" cy="22" rx="4" ry="2" fill="#ffa800"/><ellipse cx="16" cy="22" rx="4" ry="2" fill="#ffa800"/><ellipse cx="12" cy="15" rx="9" ry="7"/><circle cx="12" cy="8" r="6.500"/><ellipse cx="12" cy="17" rx="6" ry="5.500" fill="#fff"/><circle cx="9.500" cy="6.500" r="1.500" fill="#fff"/><circle cx="14.500" cy="6.500" r="1.500" fill="#fff"/><ellipse cx="12" cy="9.500" rx="3.500" ry="1.200" fill="#ffa800"/><path d="M4 11q8 4 16 0v3q-8 4-16 0zM13 0l4 2 4-1v5l-4-1-4 1z" fill="#ff18b8"/></svg>
    <svg viewBox="0 0 24 24" fill="none" stroke="#222" stroke-width="1.300"><path d="M3 23Q3 6 21 4M7 23Q7 10 21 9M11 23Q12 14 21 13.500M15 23q1-5 6-5"/><circle cx="19.500" cy="21.500" r="1.500" fill="#000"/></svg>
    <svg viewBox="0 0 24 24" fill="none" stroke="#000" stroke-width="1.300"><path d="M2 9h3l5-5v16l-5-5H2zM14 9l7 7M21 9l-7 7"/></svg>
    <svg viewBox="0 0 24 24"><path d="M7 7h15v12H5v-5M22 11h2v4h-2" fill="none" stroke="#000" stroke-width="1.400"/><path d="M8 9h6v8H8z"/><path d="M1 5h6v4q0 3-3 3t-3-3zM2 2v3M6 2v3M4 12v5" fill="#fff" stroke="#000" stroke-width="1.200"/></svg>
    <span class="ime">中</span>
    <svg viewBox="0 0 24 24"><path d="M3 3l18-3q2 0 2 2l1 17q0 2-2 3L6 24q-3 0-3-3L0 6q0-2 3-3z" fill="#f1511b"/><path d="M18 6q-10-2-10 2 0 3 5 3 5 1 4 4-1 4-10 2" fill="none" stroke="#fff" stroke-width="3"/></svg>
  </div>
  <div class="datetime"><time>21:42</time><time>2023/8/5</time></div>
  <button class="notes" aria-label="通知"><svg viewBox="0 0 24 24"><path d="M0 0h24v19H14l-3 5-3-5H0z"/><path d="M5 6h14M5 10h14M5 14h9" stroke="#d6dfc6" stroke-width="1.300"/></svg></button>
  <span class="peek"></span>
</div>
</body>
</html>
```
FILE: styles.css
```css
* { box-sizing: border-box; margin: 0; padding: 0; }
body {
  height: 100vh;
  display: flex;
  flex-direction: column;
  overflow: hidden;
  font: 18px/24px "Open Sans", "Noto Sans CJK SC", sans-serif;
  color: #000;
  background: #e3e4e6;
}
button { font: inherit; color: inherit; background: none; border: 0; display: flex; align-items: center; justify-content: center; }
h1, h2, h3 { font-size: inherit; font-weight: 400; }
a { color: inherit; text-decoration: none; }
svg { flex: none; display: block; }
.defs { position: absolute; width: 0; height: 0; }
.i16 { width: 16px; height: 16px; }
.i20 { width: 20px; height: 20px; }
.i22 { width: 22px; height: 22px; }
.i24 { width: 24px; height: 24px; }

/* window frame */
.titlebar { height: 35px; flex: none; display: flex; align-items: center; padding-left: 8px; background: #fff; border-bottom: 1px solid #dfdfdf; }
.title { flex: 1; padding-left: 24px; font-family: "Noto Sans", "Noto Sans CJK SC", sans-serif; }
.win-btn { width: 35px; height: 34px; }
.win-btn svg { width: 14px; height: 14px; }
.menubar { height: 53px; flex: none; display: flex; align-items: center; background: #fff; border-bottom: 1px solid #d4d5d7; }
.menus { width: 523px; padding: 0 0 2px 16px; display: flex; gap: 21px; white-space: nowrap; }
.tools { display: flex; align-items: center; gap: 5px; color: #4d4f53; }
.sep { width: 1px; height: 34px; margin: 0 5px; background: #c4c5c7; }
.tool { width: 36px; height: 42px; border-radius: 5px; }
.tool.on { background: #e8e9eb; border: 2px solid #c6c7c9; }
.tool svg { width: 26px; height: 26px; }
.drop { width: 14px; margin-left: -3px; color: #7b7c7e; }
.drop svg { width: 12px; height: 12px; }
.main { flex: 1; min-height: 0; display: flex; }

/* library */
.library { width: 200px; flex: none; padding: 0 5px 5px; display: flex; flex-direction: column; }
.lib-head { height: 36px; display: flex; align-items: center; justify-content: space-between; }
.lib-head button { width: 32px; height: 24px; }
.lib-head svg { width: 12px; height: 12px; }
.lib-search { height: 30px; flex: none; margin-bottom: 11px; display: flex; align-items: center; background: #fff; border: 1px solid #9a9da0; }
.lib-search > svg { width: 20px; height: 20px; margin-left: 15px; }
.lib-search input { flex: 1; min-width: 0; margin-left: 13px; border: 0; outline: 0; font: inherit; background: none; }
.lib-search input::placeholder { color: #777; opacity: 1; }
.lib-search button { width: 25px; height: 28px; }
.lib-search button svg { width: 16px; height: 10px; }
.tree { flex: 1; min-height: 0; display: flex; flex-direction: column; padding: 1px; background: #fff; border: 1px solid #828790; overflow: hidden; }
.tree-row { height: 26px; flex: none; display: flex; align-items: center; padding-left: 9px; white-space: nowrap; }
.tree-row span { padding-left: 5px; }
.minus { width: 14px; height: 14px; margin-right: 8px; }
.child { padding-left: 58px; }
.tree-row .picked { flex: 1; margin-left: 4px; padding-left: 2px; background: #f0f0f0; overflow: hidden; }
.hscroll { height: 24px; margin-top: auto; display: flex; align-items: center; background: #f0f0f0; }
.hscroll svg { width: 10px; height: 14px; margin: 0 8px; }
.thumb { height: 24px; flex: 1; margin-right: 11px; background: #cdcdcd; }

/* tab strip */
.view { flex: 1; min-width: 0; display: flex; flex-direction: column; border: 1px solid #6a6b6d; }
.tabs { height: 48px; flex: none; display: flex; align-items: flex-end; gap: 6px; padding-left: 4px; }
.tab { height: 40px; display: flex; align-items: center; border: 1px solid #b5b7b9; border-bottom: 0; border-radius: 4px 4px 0 0; background: #ebecee; }
.tab button { flex: none; color: #bbbcbe; }
.tab button svg { width: 14px; height: 14px; }
.home { width: 112px; gap: 8px; padding-left: 9px; font-size: 15px; }
.home button { margin-left: 10px; }
.active { width: 184px; padding-left: 8px; background: #fff; font-size: 16px; font-weight: 700; }
.active span { width: 126px; padding-left: 7px; }

/* guest screen */
.guest { flex: 1; min-height: 0; display: flex; flex-direction: column; padding: 46px 0; background: #000; font-family: "Noto Sans", sans-serif; font-size: 14px; line-height: 20px; }
.topbar { height: 27px; flex: none; display: grid; grid-template-columns: 97px 1fr auto 1fr; align-items: center; padding: 0 14px 0 12px; background: #1d1d1d; color: #f2f2f2; }
.appmenu { display: flex; align-items: center; gap: 6px; }
.topbar .clock { margin-right: 24px; }
.caret { width: 10px; height: 10px; }
.indicators { display: flex; align-items: center; justify-content: flex-end; gap: 12px; }
.desktop { flex: 1; min-height: 0; position: relative; display: flex; overflow: hidden; background: linear-gradient(#97213c 0, #7d1753 16%, #660f5b 32%, #560655 48%, #46044b 66%, #2e002c 100%); }
.wallpaper { position: absolute; left: 0; top: 0; width: 100%; height: 100%; }
.dock { position: relative; width: 72px; display: flex; flex-direction: column; align-items: center; gap: 4px; padding: 4px 4px 2px; background: linear-gradient(#3f1d29, #331a2e 45%, #231722); }
.dock button { position: relative; width: 64px; height: 64px; border-radius: 4px; }
.dock svg { width: 44px; height: 46px; }
.dock .running { background: #58435a; }
.running::before { content: ""; position: absolute; left: 0; top: 29px; width: 6px; height: 6px; border-radius: 3px; background: #e95420; }
.dock .apps { margin-top: auto; }
.shortcuts { position: relative; width: 126px; padding-top: 8px; display: flex; flex-direction: column; align-items: center; gap: 40px; color: #fff; text-shadow: 1px 1px 1px #000; text-align: center; }
.shortcuts svg { width: 46px; height: 45px; }

/* settings window */
.window { position: absolute; left: 405px; right: 333px; top: 0; bottom: 0; display: flex; flex-direction: column; border-radius: 8px 8px 0 0; overflow: hidden; box-shadow: 0 2px 10px 4px rgba(0, 0, 0, .45); background: #f7f7f7; }
.wbar { height: 47px; flex: none; display: flex; background: #323030; border-top: 1px solid #4a4848; border-bottom: 1px solid #1c1b1b; color: #fff; font-weight: 700; }
.wbar h2 { flex: 1; text-align: center; font-weight: 700; }
.wbar-left { width: 243px; display: flex; align-items: center; padding: 0 7px 2px; border-right: 1px solid #242323; }
.hbtn { width: 34px; height: 32px; border-radius: 4px; background: #4a4946; }
.wbar-right { flex: 1; position: relative; display: flex; align-items: center; padding-bottom: 2px; }
.wctl { position: absolute; right: 13px; top: 11px; display: flex; gap: 20px; }
.wctl button { width: 20px; height: 20px; border-radius: 10px; }
.wctl svg { width: 20px; height: 20px; }
.wctl .wclose { background: #e95420; }
.wbody { flex: 1; min-height: 0; display: flex; }
.cats { width: 243px; margin-top: -8px; background: #fff; border-right: 1px solid #c5c5c5; overflow: hidden; clip-path: inset(8px 0 0 0); }
.cats a { height: 45px; display: flex; align-items: center; gap: 12px; padding-left: 14px; padding-right: 17px; }
.cats svg { width: 16px; height: 16px; color: #3d3d3d; }
.cats .chev { width: 8px; margin-left: auto; }
.cats .end { height: 46px; border-bottom: 1px solid #dedede; }
.cats .current { background: #e95420; color: #fff; }
.cats .current svg { color: #f8c8b5; }
.panel { flex: 1; display: flex; flex-direction: column; padding: 32px 79px 0; }
.card { background: #fff; border: 1px solid #c3c3c3; }
.row { width: 100%; height: 54px; display: flex; align-items: center; justify-content: space-between; padding: 0 15px 0 14px; }
.row + .row { height: 55px; border-top: 1px solid #dedede; }
.sources-head { display: flex; justify-content: space-between; align-items: flex-start; padding: 27px 0 9px; }
.sources-head h3 { font-weight: 700; color: #3d3d3d; line-height: 24px; }
.sources-head p { color: #929292; line-height: 22px; }
.sq { width: 36px; height: 34px; border: 1px solid #c3c3c3; border-radius: 5px; background: #fbfbfb; color: #333; }
.sources-head .sq { margin-top: 3px; }
.soft { border-color: #dedede; margin-left: 12px; background: #fff; }
.source { padding-left: 9px; }
.grip { width: 10px; height: 16px; margin-right: 15px; }
.grow { flex: 1; }
.row.add { justify-content: center; }
.add svg { width: 12px; height: 12px; }
.manage { position: relative; height: 34px; margin-top: 12px; border: 1px solid #c3c3c3; border-radius: 5px; background: #fbfbfb; color: #3d3d3d; }
.mark { position: absolute; left: calc(50% - 100px); top: 6px; width: 209px; height: 23px; border: 3px solid #fb3838; }

/* status bar */
.status { position: relative; height: 30px; flex: none; display: flex; align-items: center; padding: 0 32px 0 1px; }
.hint { flex: 1; white-space: nowrap; }
.devices { display: flex; gap: 7px; color: #b3b4b6; }
.devices svg { width: 22px; height: 22px; }
.covered { width: 51px; }
.vline { width: 1px; height: 26px; margin: 0 10px 0 9px; background: #96989a; }
.bird { position: absolute; right: 95px; bottom: 0; width: 74px; height: 37px; }

/* taskbar */
.taskbar { height: 55px; flex: none; display: flex; align-items: center; padding-bottom: 1px; background: linear-gradient(100deg, #d0dec8 0, #d3dfc9 18%, #d6ebe2 33%, #d4dfc6 45%, #cfe0be 55%, #d2e5b8 67%, #dcdcc0 82%, #cfe0e4 90%, #d2dfc2 100%); }
.start { margin-left: 15px; }
.find { margin-left: 30px; }
.start svg, .find svg { width: 24px; height: 24px; }
.bars { width: 5px; height: 40px; margin-left: 24px; border: solid #000; border-width: 0 1px; }
.apps-row { margin-left: 17px; align-self: stretch; display: grid; grid-template-columns: repeat(10, 52px) repeat(11, 51px); }
.apps-row button { position: relative; height: 47px; padding-bottom: 2px; }
.apps-row svg { width: 24px; height: 24px; }
.focus { background: rgba(255, 255, 255, .6); }
.run::after, .focus::after { content: ""; position: absolute; left: 7px; right: 7px; bottom: 0; height: 3px; background: #8a159c; }
.focus::after { left: 0; right: 0; }
.multi::after { background: linear-gradient(90deg, #8a159c 68%, #b878c4 68%); }
.mem { width: 91px; text-align: center; color: #f4645f; }
.mem span, .datetime time { display: block; line-height: 25px; }
.weather { display: flex; align-items: center; gap: 12px; margin-left: 31px; width: 114px; font-size: 20px; }
.weather svg { width: 36px; height: 34px; }
.tray { display: flex; align-items: center; gap: 12px; margin-left: 8px; }
.tray svg { width: 24px; height: 24px; }
.ime { width: 28px; font-size: 22px; font-weight: 700; text-align: center; color: #fff; -webkit-text-stroke: 1px #000; }
.datetime { flex: 1; text-align: center; font-size: 19px; }
.notes { margin-right: 31px; }
.notes svg { width: 24px; height: 24px; }
.peek { width: 1px; height: 54px; margin-right: 6px; background: #a8b39c; }
.dev, .cpp, .zhi, .ty { text-anchor: middle; font: 700 10px "Open Sans", sans-serif; fill: #fff; }
.cpp { fill: #2a7de0; }
.zhi { font: 700 17px "Noto Sans CJK SC", sans-serif; }
.ty { font: 18px "Liberation Serif", serif; fill: #222; }
```
